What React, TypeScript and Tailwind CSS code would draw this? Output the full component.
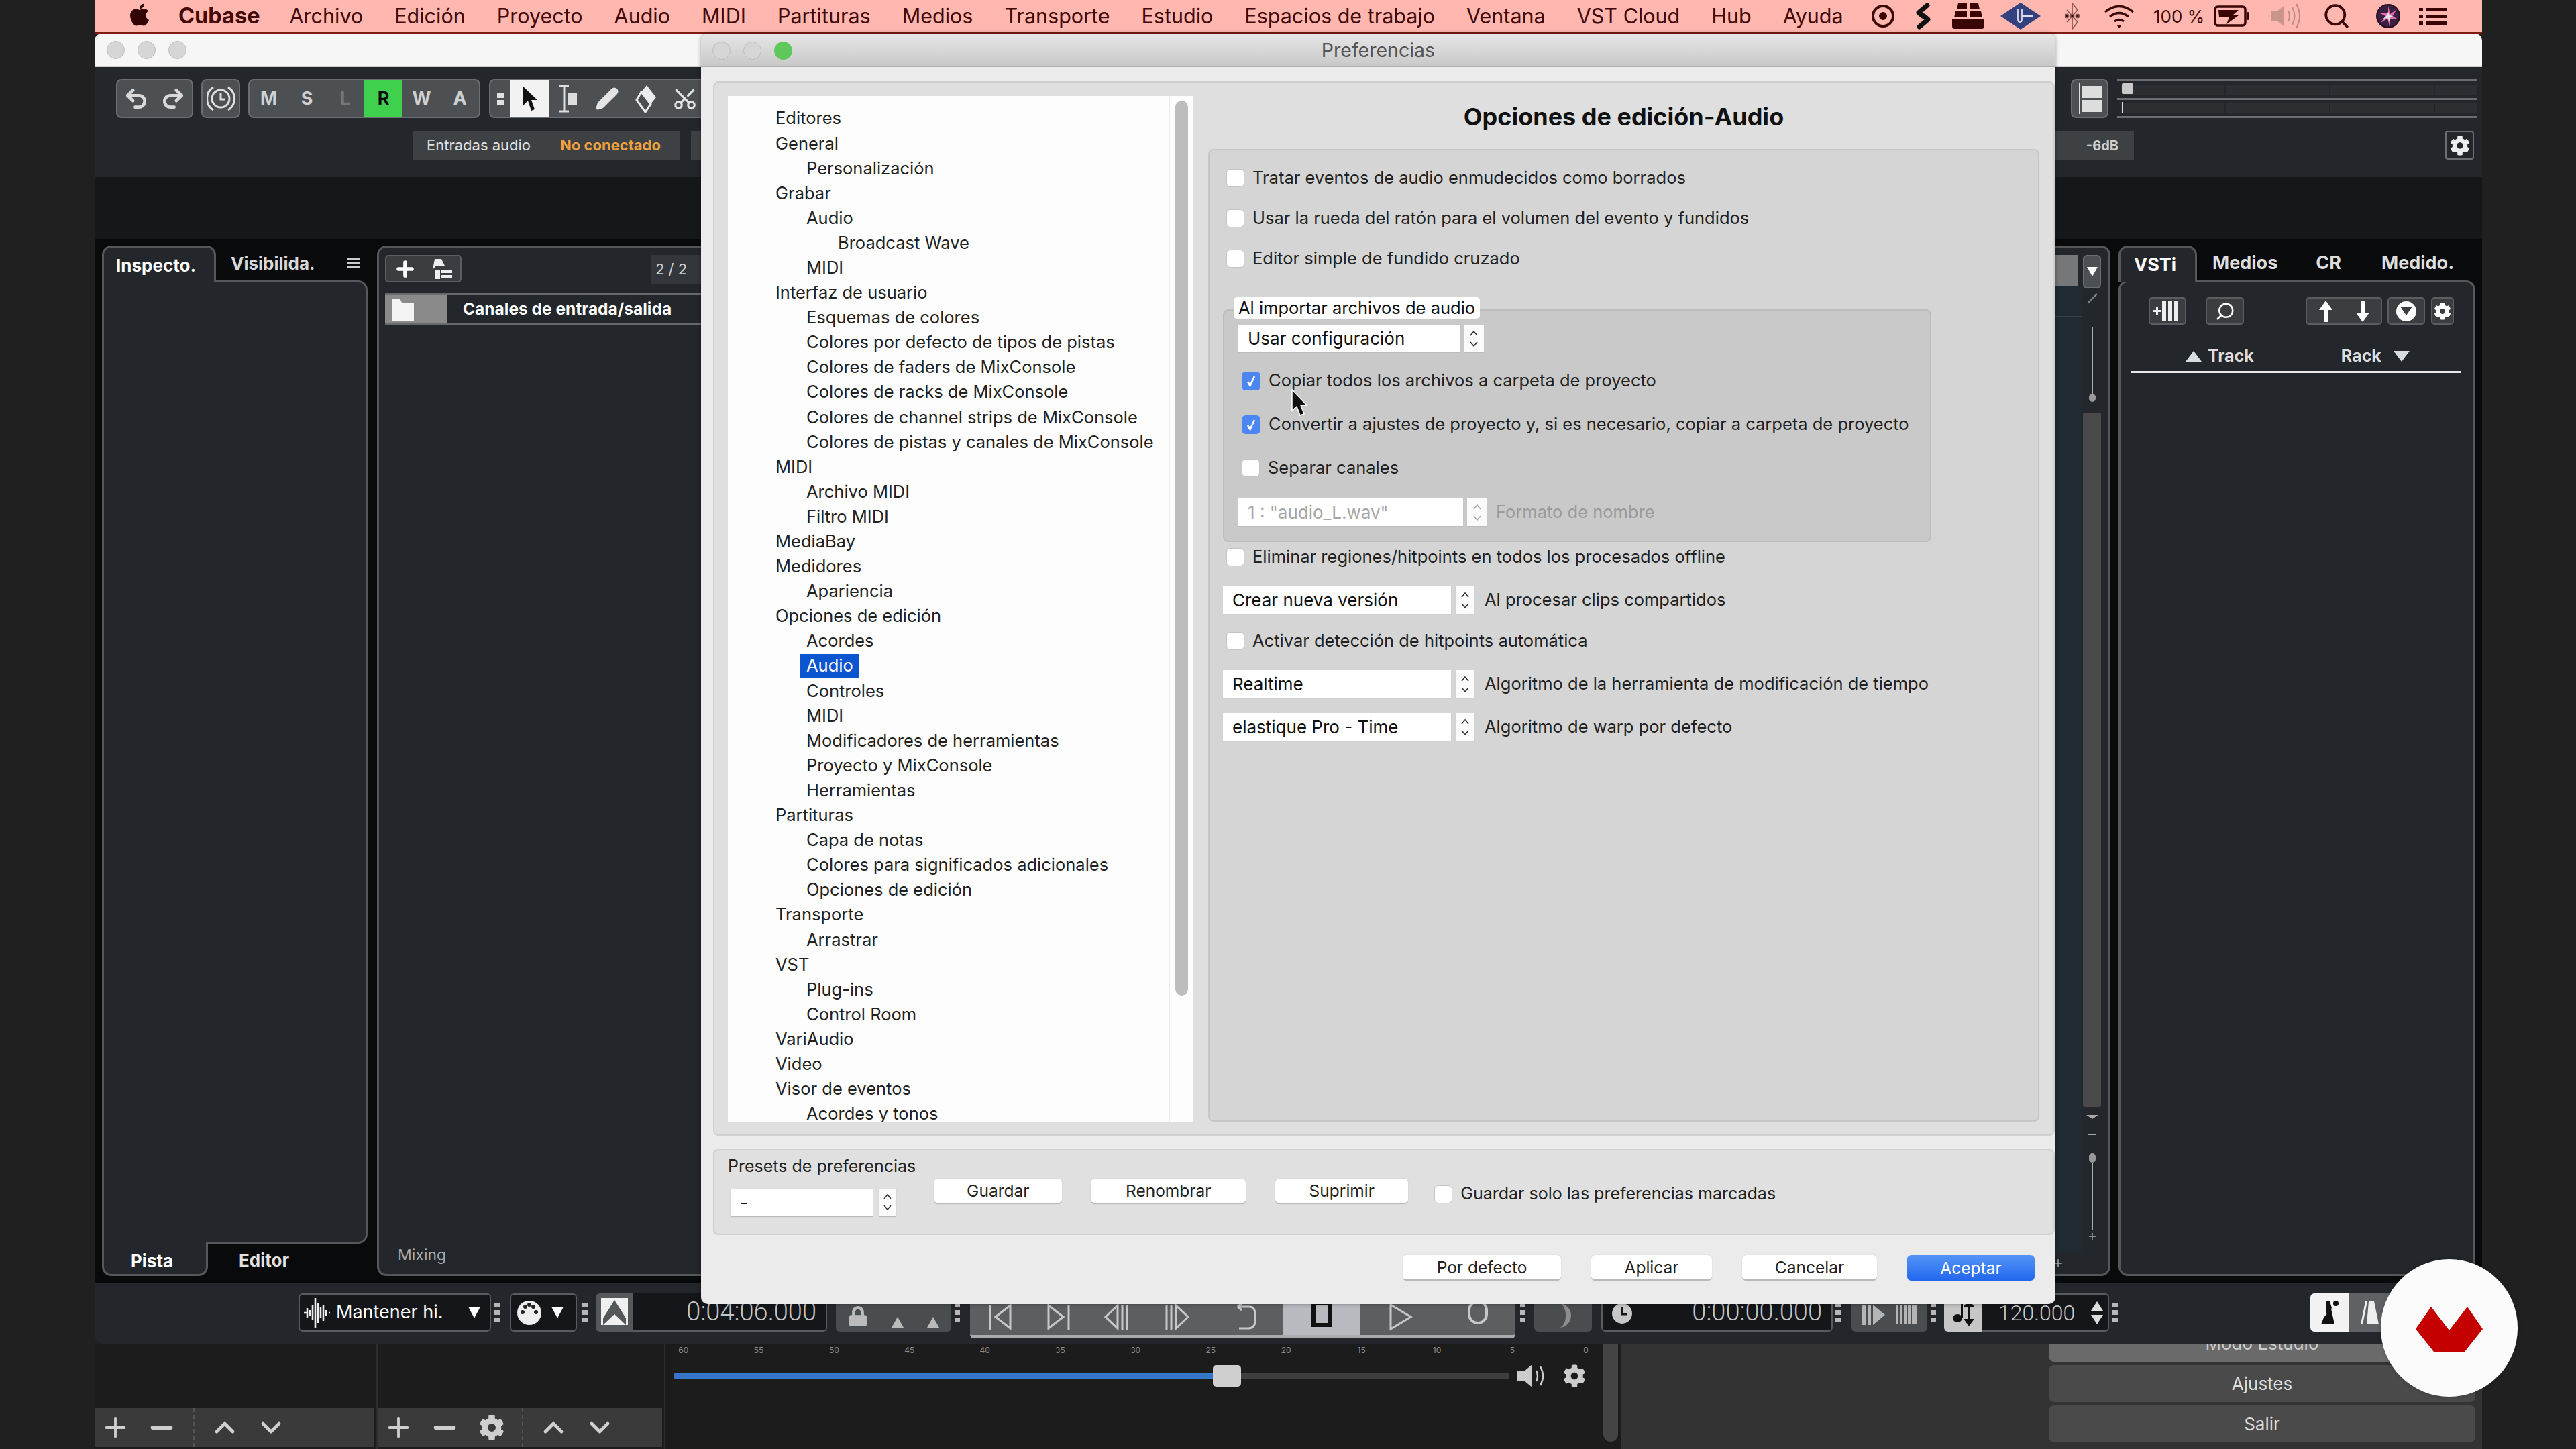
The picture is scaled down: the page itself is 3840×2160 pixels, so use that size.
import React from "react";
import { FaApple, FaCog, FaLock } from "react-icons/fa";
import { Undo2, Redo2, Pencil, Scissors, Plus, Minus, ChevronUp, ChevronDown, Search } from "lucide-react";

const tree: [number, string][] = [
  [0, "Editores"], [0, "General"], [1, "Personalización"], [0, "Grabar"], [1, "Audio"], [2, "Broadcast Wave"], [1, "MIDI"],
  [0, "Interfaz de usuario"], [1, "Esquemas de colores"], [1, "Colores por defecto de tipos de pistas"], [1, "Colores de faders de MixConsole"],
  [1, "Colores de racks de MixConsole"], [1, "Colores de channel strips de MixConsole"], [1, "Colores de pistas y canales de MixConsole"],
  [0, "MIDI"], [1, "Archivo MIDI"], [1, "Filtro MIDI"], [0, "MediaBay"], [0, "Medidores"], [1, "Apariencia"], [0, "Opciones de edición"],
  [1, "Acordes"], [1, "Audio"], [1, "Controles"], [1, "MIDI"], [1, "Modificadores de herramientas"], [1, "Proyecto y MixConsole"], [1, "Herramientas"],
  [0, "Partituras"], [1, "Capa de notas"], [1, "Colores para significados adicionales"], [1, "Opciones de edición"], [0, "Transporte"], [1, "Arrastrar"],
  [0, "VST"], [1, "Plug-ins"], [1, "Control Room"], [0, "VariAudio"], [0, "Video"], [0, "Visor de eventos"], [1, "Acordes y tonos"],
];
const menu = ["Archivo", "Edición", "Proyecto", "Audio", "MIDI", "Partituras", "Medios", "Transporte", "Estudio", "Espacios de trabajo", "Ventana", "VST Cloud", "Hub", "Ayuda"];
const db = ["-60", "-55", "-50", "-45", "-40", "-35", "-30", "-25", "-20", "-15", "-10", "-5", "0"];

function Dots() {
  return (
    <div className="flex flex-col gap-[4px] w-[8px]">
      <div className="h-[7px] bg-[#b8b8b8]" />
      <div className="h-[7px] bg-[#b8b8b8]" />
      <div className="h-[7px] bg-[#b8b8b8]" />
    </div>
  );
}

function Check({ on }: { on?: boolean }) {
  return (
    <div className={on ? "w-[28px] h-[28px] shrink-0 rounded-[6px] bg-[#4b86f2] flex items-center justify-center" : "w-[27px] h-[27px] shrink-0 rounded-[6px] bg-white border border-[#c4c4c4]"}>
      {on && (
        <svg width="18" height="20" viewBox="0 0 18 20" fill="none">
          <path d="M4 11l3.5 6L14 3" stroke="#fff" strokeWidth="2.6" />
        </svg>
      )}
    </div>
  );
}

function CheckRow({ label, h, on }: { label: string; h: string; on?: boolean }) {
  return (
    <div className={`flex items-center gap-[12px] ${h}`}>
      <Check on={on} />
      <span className="text-[25.5px] text-[#222]">{label}</span>
    </div>
  );
}

function Spin({ dim, w }: { dim?: boolean; w: string }) {
  const c = dim ? "#a8a8a8" : "#333";
  return (
    <div className={`${w} self-stretch bg-[#fbfbfb] flex items-center justify-center shadow-[0_1px_1px_#bbb]`}>
      <svg width="14" height="28" viewBox="0 0 14 28" fill="none" stroke={c} strokeWidth="1.6">
        <path d="M2 9l5-6 5 6" />
        <path d="M2 19l5 6 5-6" />
      </svg>
    </div>
  );
}

function Select({ text, w, spinGap, spinW, dim }: { text: string; w: string; spinGap: string; spinW: string; dim?: boolean }) {
  return (
    <div className={`flex items-center h-[41px] ${spinGap}`}>
      <div className={`${w} h-full bg-white shadow-[0_1px_1px_#bbb] flex items-center pl-[14px] text-[26px] ${dim ? "text-[#a6a6a6]" : "text-[#111]"}`}>{text}</div>
      <Spin dim={dim} w={spinW} />
    </div>
  );
}

function SelectRow({ text, label, cls }: { text: string; label: string; cls: string }) {
  return (
    <div className={`flex items-center ${cls}`}>
      <Select text={text} w="w-[340px]" spinGap="gap-[7px]" spinW="w-[28px]" />
      <span className="ml-[15px] text-[25.5px] text-[#222]">{label}</span>
    </div>
  );
}

function Btn({ text, w, blue }: { text: string; w: string; blue?: boolean }) {
  return (
    <div className={`${w} h-[38px] rounded-[6px] flex items-center justify-center text-[24.5px] ${blue ? "bg-gradient-to-b from-[#5494f8] to-[#2266ee] text-white" : "bg-white text-[#222] border-b-2 border-[#b9b9b9] shadow-[0_0_1px_#aaa]"}`}>
      {text}
    </div>
  );
}

function Group({ w, cls, children }: { w: string; cls?: string; children?: React.ReactNode }) {
  return <div className={`${w} h-[58px] flex items-center rounded-[8px] border-2 border-[#6b6e71] bg-[#4d5053] overflow-hidden ${cls ?? ""}`}>{children}</div>;
}

function Letter({ c, cls }: { c: string; cls?: string }) {
  return <div className={`w-[58px] h-full flex items-center justify-center text-[27px] font-bold ${cls ?? "text-[#d0d0d0]"}`}>{c}</div>;
}

function Lights({ green }: { green?: boolean }) {
  return (
    <div className="flex gap-[19px]">
      <div className="w-[27px] h-[27px] rounded-full bg-[#d6d6d6] border border-[#bdbdbd]" />
      <div className="w-[27px] h-[27px] rounded-full bg-[#d6d6d6] border border-[#bdbdbd]" />
      <div className={`w-[27px] h-[27px] rounded-full ${green ? "bg-[#5fc85b]" : "bg-[#d6d6d6] border border-[#bdbdbd]"}`} />
    </div>
  );
}

function SmallBox({ w, children }: { w: string; children?: React.ReactNode }) {
  return <div className={`${w} h-[41px] flex items-center justify-around rounded-[5px] border-2 border-[#5b5e61] bg-[#3b3e41] text-white`}>{children}</div>;
}

function BottomBar({ gear }: { gear?: boolean }) {
  return (
    <div className="mt-auto mb-[3px] h-[58px] mr-[3px] bg-[#3a3a3a] flex items-center text-[#cfcfcf]">
      <Plus size={46} strokeWidth={2} className="ml-[8px]" />
      <Minus size={46} strokeWidth={3} className="ml-[23px]" />
      {gear && <FaCog size={38} className="ml-[28px]" />}
      <div className={`h-full border-l-2 border-dashed border-[#555] ${gear ? "ml-[26px]" : "ml-[24px]"}`} />
      <ChevronUp size={48} strokeWidth={2.4} className="ml-[21px]" />
      <ChevronDown size={48} strokeWidth={2.4} className="ml-[21px]" />
    </div>
  );
}

function TIcon({ d, cx, fill }: { d: string; cx: string; fill?: string }) {
  return (
    <svg width="44" height="46" viewBox="0 0 44 46" className={`${cx} mt-[12px]`} fill={fill ?? "none"} stroke="#c8c8c8" strokeWidth="3">
      <path d={d} />
    </svg>
  );
}

export default function App() {
  return (
    <div className="relative w-[3840px] h-[2160px] overflow-hidden bg-[#202020] font-[family-name:Inter,sans-serif]">
      <div className="ml-[141px] w-[3559px] h-full flex flex-col">
        {/* menu bar */}
        <div className="h-[50px] shrink-0 bg-[#ffb7af] border-b-2 border-[#7d1a14] flex items-center pl-[48px] pr-[52px] text-[#430808] text-[30.5px]">
          <FaApple size={38} className="mr-[39px] text-[#330404] -mt-[4px]" />
          <span className="font-bold text-[32.5px] mr-[44px]">Cubase</span>
          <div className="flex gap-[47px]">
            {menu.map((m) => (
              <span key={m}>{m}</span>
            ))}
          </div>
          <div className="ml-auto flex items-center">
            <svg width="36" height="38" viewBox="0 0 36 38" fill="none"><circle cx="18" cy="19" r="15" stroke="#3a0505" strokeWidth="4" /><circle cx="18" cy="19" r="6" fill="#3a0505" /></svg>
            <svg width="28" height="40" viewBox="0 0 28 40" className="ml-[28px]" fill="none" stroke="#111" strokeWidth="7" strokeLinecap="round" strokeLinejoin="round"><path d="M20 4L7 15l6 5" /><path d="M8 36l13-11-6-5" /></svg>
            <svg width="50" height="40" viewBox="0 0 50 40" className="ml-[28px]" fill="#3a0505"><path d="M10 1h13v9H8zM27 1h13l2 9H27zM6 13h17v9H4zM27 13h17l2 9H27zM1 25h48v10q0 4-4 4H5q-4 0-4-4z" /></svg>
            <svg width="60" height="40" viewBox="0 0 60 40" className="ml-[23px]"><path d="M30 0l30 20-30 20L0 20z" fill="#33417f" /><path d="M26 10v15q0 4 3 4t3-4V10M32 20h16" stroke="#dde" strokeWidth="1.8" fill="none" /></svg>
            <svg width="22" height="42" viewBox="0 0 22 42" className="ml-[36px]" fill="none" stroke="#8a5a58" strokeWidth="1.8"><path d="M11 2v38l8-10L3 12M11 2l8 10L3 30" /><circle cx="3" cy="21" r="2.5" fill="#3a0505" /><circle cx="19" cy="21" r="2.5" fill="#3a0505" /><circle cx="11" cy="21" r="2.5" fill="#3a0505" /></svg>
            <svg width="46" height="38" viewBox="0 0 46 38" className="ml-[36px]" fill="none" stroke="#3a0505" strokeWidth="3.2"><path d="M2 13q21-17 42 0M9 20q14-11 28 0M16 27q7-5 14 0" /><path d="M23 37l-4-5h8z" fill="#3a0505" stroke="none" /></svg>
            <span className="ml-[28px] w-[77px] text-[26px] whitespace-nowrap">100 %</span>
            <svg width="54" height="32" viewBox="0 0 54 32" className="ml-[13px]" fill="none"><rect x="2" y="2" width="45" height="28" rx="4" stroke="#3a0505" strokeWidth="3.5" /><rect x="49" y="10" width="4" height="12" rx="2" fill="#3a0505" /><path d="M7 7h30l-9 8h9L19 28l4-10h-15z" fill="#3a0505" /></svg>
            <svg width="46" height="40" viewBox="0 0 46 40" className="ml-[30px]" fill="none" stroke="#b98a85" strokeWidth="2"><path d="M2 13h8l10-8v30l-10-8H2z" fill="#c9968f" stroke="none" /><path d="M27 12q4 8 0 16M33 7q7 13 0 26M39 2q10 18 0 36" /></svg>
            <Search size={42} strokeWidth={2.2} className="ml-[32px] text-[#3a0505]" />
            <svg width="36" height="38" viewBox="0 0 36 38" className="ml-[38px]"><circle cx="18" cy="19" r="17" fill="#3a2040" stroke="#2a0a1a" strokeWidth="2" /><path d="M18 4l3 12 10-7-7 10 9 5-12-1-1 11-3-11-10 6 7-10-8-4 12 0z" fill="#e86aa8" /><path d="M18 13l2 5 6 1-5 2-1 6-3-5-6 1 4-4z" fill="#dfe4ee" /></svg>
            <div className="ml-[28px] flex flex-col gap-[5px]">
              <div className="w-[42px] h-[5px] bg-[linear-gradient(90deg,#3a0505_6px,transparent_6px,transparent_10px,#3a0505_10px)]" />
              <div className="w-[42px] h-[5px] bg-[linear-gradient(90deg,#3a0505_6px,transparent_6px,transparent_10px,#3a0505_10px)]" />
              <div className="w-[42px] h-[5px] bg-[linear-gradient(90deg,#3a0505_6px,transparent_6px,transparent_10px,#3a0505_10px)]" />
            </div>
          </div>
        </div>
        {/* window title */}
        <div className="h-[50px] shrink-0 bg-[#f6f6f6] rounded-t-[10px] border-b-2 border-[#d0d0d0] flex items-center pl-[18px]">
          <Lights />
        </div>
        {/* toolbar */}
        <div className="h-[164px] shrink-0 bg-[#23262a] pt-[18px] pr-[8px] flex flex-col">
          <div className="flex items-start pl-[32px]">
            <Group w="w-[115px]" cls="justify-around text-[#d8d8d8]">
              <Undo2 size={38} strokeWidth={3} />
              <Redo2 size={38} strokeWidth={3} />
            </Group>
            <Group w="w-[58px] ml-[12px]" cls="justify-center">
              <svg width="42" height="44" viewBox="0 0 42 44" fill="none" stroke="#e0e0e0" strokeWidth="3"><path d="M10 5a20 20 0 0 0 0 34M32 5a20 20 0 0 1 0 34" /><circle cx="21" cy="22" r="13" /><path d="M21 13v10h7" /></svg>
            </Group>
            <Group w="w-[346px] ml-[12px]">
              <Letter c="M" />
              <Letter c="S" />
              <Letter c="L" cls="text-[#75787b]" />
              <Letter c="R" cls="bg-[#3fd14e] text-[#0a0a0a]" />
              <Letter c="W" />
              <Letter c="A" />
            </Group>
            <Group w="w-[400px] ml-[13px]">
              <div className="w-[29px] flex justify-center"><div className="flex flex-col gap-[3px] w-[10px]"><div className="h-[7px] bg-[#e0e0e0]" /><div className="h-[7px] bg-[#e0e0e0]" /></div></div>
              <div className="w-[58px] h-full bg-[#f2f2f2] flex items-center justify-center">
                <svg width="26" height="40" viewBox="0 0 26 40"><path d="M4 2v28l7-7 5 15 5-2-5-14h9z" fill="#111" /></svg>
              </div>
              <div className="w-[58px] flex justify-center">
                <svg width="34" height="44" viewBox="0 0 34 44" fill="none"><path d="M4 3h14M4 41h14M11 3v38" stroke="#ddd" strokeWidth="3" /><rect x="17" y="14" width="13" height="18" fill="#ddd" /></svg>
              </div>
              <div className="w-[58px] flex justify-center"><Pencil size={36} className="text-[#e4e4e4]" fill="#e4e4e4" /></div>
              <div className="w-[58px] flex justify-center">
                <svg width="34" height="44" viewBox="0 0 34 44"><path d="M18 2l14 18-8 10L10 12z" fill="#ececec" /><path d="M10 12l14 18-8 12L3 24z" fill="none" stroke="#ececec" strokeWidth="3" /></svg>
              </div>
              <div className="w-[58px] flex justify-center"><Scissors size={38} className="text-[#e4e4e4] -rotate-90" /></div>
            </Group>
            <div className="ml-auto flex items-start">
              <div className="w-[56px] h-[58px] rounded-[8px] border-2 border-[#6b6e71] bg-[#4d5053] flex items-center pl-[10px] gap-[3px]">
                <div className="w-[2px] h-[46px] bg-[#ddd]" />
                <div className="flex flex-col gap-[3px]"><div className="w-[30px] h-[18px] bg-[#ddd]" /><div className="w-[30px] h-[18px] bg-[#ddd]" /></div>
              </div>
              <div className="ml-[13px] w-[536px] h-[58px] flex flex-col">
                {[0, 1].map((i) => (
                  <div key={i} className="relative h-[28px] border-t-[3px] border-[#6a6d70] flex items-center gap-[2px] pl-[6px] last:border-b-[3px] last:h-[30px]">
                    <div className="flex-1 h-[16px] bg-[#2c2f32]" />
                    <div className="flex-1 h-[16px] bg-[#2c2f32]" />
                    <div className="flex-1 h-[16px] bg-[#2c2f32]" />
                    <div className="w-[62px] h-[16px] bg-[#2c2f32]" />
                    {i === 0 && <div className="absolute left-[7px] top-[3px] w-[17px] h-[16px] rounded-[2px] bg-[#c9c9c9]" />}
                    {i === 1 && <div className="absolute left-[7px] top-[3px] w-[2px] h-[16px] bg-[#ddd]" />}
                  </div>
                ))}
              </div>
            </div>
          </div>
          <div className="mt-[19px] flex items-center">
            <div className="ml-[474px] w-[398px] h-[43px] bg-[#3e4144] flex items-center pl-[21px] text-[22px]">
              <span className="text-[#e2e2e2]">Entradas audio</span>
              <span className="ml-[44px] text-[#eea13e] font-bold">No conectado</span>
            </div>
            <div className="ml-[17px] w-[60px] h-[43px] bg-[#3e4144]" />
            <div className="ml-auto mr-[4px] flex items-center">
              <div className="w-[120px] h-[43px] bg-[#3e4144] flex items-center justify-end pr-[23px] text-[20px] font-bold text-[#cfcfcf]">-6dB</div>
              <div className="ml-[464px] w-[43px] h-[43px] rounded-[4px] border-2 border-[#6b6e71] flex items-center justify-center text-[#eee]"><FaCog size={30} /></div>
            </div>
          </div>
        </div>
        <div className="h-[92px] shrink-0 bg-[#15181b]" />
        {/* panels */}
        <div className="h-[1556px] shrink-0 bg-[#090a0b] pt-[10px] pb-[10px] pl-[11px] pr-[10px] flex">
          {/* inspector */}
          <div className="w-[396px] shrink-0 flex flex-col">
            <div className="h-[52px] flex items-center shrink-0 text-[26px] font-bold">
              <div className="w-[170px] h-[55px] self-start z-10 flex items-center pl-[18px] bg-[#23262a] border-t-[3px] border-x-[3px] border-[#55585b] rounded-t-[14px] text-white">Inspecto.</div>
              <span className="ml-[22px] text-[#d8d8d8]">Visibilida.</span>
              <div className="ml-[48px] w-[18px] flex flex-col gap-[2px]"><div className="h-[4px] bg-[#ccc]" /><div className="h-[4px] bg-[#ccc]" /><div className="h-[4px] bg-[#ccc]" /></div>
            </div>
            <div className="flex-1 bg-[#23262a] border-[3px] border-[#55585b] rounded-tr-[14px] rounded-br-[14px]" />
            <div className="h-[48px] flex items-end shrink-0 text-[26px] font-bold">
              <div className="w-[158px] h-[51px] -mt-[3px] z-10 flex items-center pl-[40px] pt-[8px] bg-[#23262a] border-b-[3px] border-x-[3px] border-[#55585b] rounded-b-[14px] text-white">Pista</div>
              <span className="ml-[46px] mb-[4px] text-[#e2e2e2]">Editor</span>
            </div>
          </div>
          {/* project */}
          <div className="ml-[14px] flex-1 bg-[#23262a] border-[3px] border-[#55585b] rounded-[14px] flex overflow-hidden">
            <div className="flex-1 flex flex-col pt-[11px] pl-[9px]">
              <div className="h-[46px] flex shrink-0">
                <SmallBox w="w-[114px]">
                  <Plus size={34} strokeWidth={4} />
                  <svg width="34" height="34" viewBox="0 0 34 34" fill="#eee"><path d="M6 2h10l5 10H8l-5 6zM6 18h8v14H6z" /><rect x="16" y="18" width="16" height="5" /><rect x="16" y="26" width="16" height="5" /></svg>
                </SmallBox>
                <div className="ml-[282px] w-[75px] h-[43px] pr-[14px] bg-[#33363a] flex items-center justify-center text-[22px] text-[#cfcfcf]">2 / 2</div>
                <div className="flex-1 h-[57px] mr-[7px] bg-[#757779]" />
              </div>
              <div className="flex flex-1 mt-[11px]">
                <div className="w-[2000px] flex flex-col">
                  <div className="h-[47px] border-y-[3px] border-[#666a6d] flex items-center">
                    <div className="w-[92px] h-full bg-[#8a8a8a] flex items-center pl-[9px]">
                      <svg width="36" height="36" viewBox="0 0 36 36" fill="#f4f4f4"><path d="M1 2h12l3 6h18v28H1z" /></svg>
                    </div>
                    <span className="ml-[24px] text-[24.5px] font-bold text-white">Canales de entrada/salida</span>
                  </div>
                  <span className="mt-auto mb-[11px] ml-[19px] text-[23px] text-[#a8a8a8]">Mixing</span>
                </div>
                <div className="flex-1 -mt-[11px] flex flex-col">
                  <div className="flex-1 bg-[#1f2a33]">
                    <div className="h-[45px]" />
                    <div className="border-t border-[#36414a]" />
                  </div>
                  <div className="h-[32px] shrink-0 pl-[485px] flex items-center"><Plus size={18} className="text-[#aaa]" /></div>
                </div>
              </div>
            </div>
            <div className="w-[39px] shrink-0 flex flex-col items-center pt-[11px] pr-[10px]">
              <div className="w-[27px] h-[50px] rounded-[6px] border-2 border-[#6b6e71] bg-[#4d5053] flex items-center justify-center"><div className="w-0 h-0 border-x-[8px] border-x-transparent border-t-[14px] border-t-white" /></div>
              <div className="mt-[14px] w-[20px] h-[2px] bg-[#888] -rotate-45" />
              <div className="mt-[41px] w-[2px] h-[100px] bg-[#aaa]" />
              <div className="w-[10px] h-[12px] rounded-full bg-[#999]" />
              <div className="mt-[16px] w-[27px] h-[1035px] rounded-[3px] bg-[#4a4a4a]" />
              <div className="mt-[12px] w-0 h-0 border-x-[9px] border-x-transparent border-t-[6px] border-t-[#aaa]" />
              <div className="mt-[22px] w-[12px] h-[2px] bg-[#aaa]" />
              <div className="mt-[27px] w-[10px] h-[14px] rounded-full bg-[#999]" />
              <div className="w-[2px] h-[100px] bg-[#aaa]" />
              <Plus size={16} className="text-[#aaa] mt-[2px]" />
            </div>
          </div>
          {/* right zone */}
          <div className="ml-[12px] w-[532px] shrink-0 flex flex-col">
            <div className="h-[52px] flex items-center shrink-0 text-[27px] font-bold text-[#ddd]">
              <div className="w-[117px] h-[55px] self-start z-10 flex items-center pl-[20px] bg-[#23262a] border-t-[3px] border-x-[3px] border-[#55585b] rounded-t-[14px] text-white">VSTi</div>
              <span className="ml-[23px]">Medios</span>
              <span className="ml-[57px]">CR</span>
              <span className="ml-[60px]">Medido.</span>
            </div>
            <div className="flex-1 bg-[#23262a] border-[3px] border-[#55585b] rounded-[14px] pt-[22px] flex flex-col">
              <div className="flex items-center">
                <div className="ml-[42px]"><SmallBox w="w-[56px]"><svg width="44" height="34" viewBox="0 0 44 34" fill="#eee"><path d="M1 15h4v-4h3v4h4v3H8v4H5v-4H1zM14 2h6v30h-6zM23 2h6v30h-6zM32 2h6v30h-6z" /></svg></SmallBox></div>
                <div className="ml-[29px]"><SmallBox w="w-[57px]"><Search size={30} className="-scale-x-100" /></SmallBox></div>
                <div className="ml-[92px]"><SmallBox w="w-[114px]">
                  <svg width="24" height="34" viewBox="0 0 24 34" fill="#fff"><path d="M12 1l10 14h-7v18H9V15H2z" /></svg>
                  <svg width="24" height="34" viewBox="0 0 24 34" fill="#fff"><path d="M12 33L2 19h7V1h6v18h7z" /></svg>
                </SmallBox></div>
                <div className="ml-[8px]"><SmallBox w="w-[56px]"><div className="w-[30px] h-[30px] rounded-full bg-white flex items-center justify-center"><div className="w-0 h-0 border-x-[9px] border-x-transparent border-t-[13px] border-t-[#3b3e41]" /></div></SmallBox></div>
                <div className="ml-[9px]"><SmallBox w="w-[34px]"><FaCog size={26} /></SmallBox></div>
              </div>
              <div className="mt-[24px] ml-[15px] w-[492px] h-[48px] border-b-[3px] border-[#e8e8e8] flex items-center text-[25px] font-bold text-[#ddd]">
                <div className="w-0 h-0 ml-[82px] border-x-[12px] border-x-transparent border-b-[16px] border-b-[#d8dde2]" />
                <span className="ml-[9px]">Track</span>
                <span className="ml-[130px]">Rack</span>
                <div className="w-0 h-0 ml-[18px] border-x-[12px] border-x-transparent border-t-[16px] border-t-[#d8dde2]" />
              </div>
            </div>
          </div>
        </div>
        {/* transport */}
        <div className="h-[91px] shrink-0 z-10 bg-[#23262a] rounded-b-[14px] pt-[16px] flex items-start text-[#c9c9c9]">
          <div className="ml-[304px] w-[287px] h-[57px] rounded-[6px] border-2 border-[#595c5f] bg-[#14161a] flex items-center pl-[4px] text-white">
            <svg width="42" height="50" viewBox="0 0 42 50" fill="none" stroke="#eee" strokeWidth="2.6"><path d="M2 25h4M7 18v14M11 21v8M15 14v22M19 3v44M23 10v30M27 17v16M31 13v24M35 21v8M39 25h2" /></svg>
            <span className="ml-[8px] text-[27px]">Mantener hi.</span>
            <div className="ml-auto mr-[14px] w-0 h-0 border-x-[9px] border-x-transparent border-t-[17px] border-t-white" />
          </div>
          <div className="ml-[5px] mt-[14px]"><Dots /></div>
          <div className="ml-[15px] w-[100px] h-[57px] rounded-[6px] border-2 border-[#595c5f] bg-[#14161a] flex items-center pl-[8px]">
            <svg width="38" height="38" viewBox="0 0 38 38"><circle cx="19" cy="19" r="18" fill="#eee" /><circle cx="9" cy="18" r="3" fill="#222" /><circle cx="13" cy="10" r="3" fill="#222" /><circle cx="19" cy="7" r="3" fill="#222" /><circle cx="25" cy="10" r="3" fill="#222" /><circle cx="29" cy="18" r="3" fill="#222" /></svg>
            <div className="ml-[14px] w-0 h-0 border-x-[9px] border-x-transparent border-t-[17px] border-t-white" />
          </div>
          <div className="ml-[8px] mt-[14px]"><Dots /></div>
          <div className="ml-[12px] w-[55px] h-[57px] rounded-l-[6px] bg-[#55585b] flex items-center justify-center">
            <svg width="40" height="44" viewBox="0 0 40 44"><rect width="40" height="40" fill="#f0f0f0" /><path d="M3 40V30L20 3l17 27v10L20 24z" fill="#55585b" /></svg>
          </div>
          <div className="w-[290px] h-[57px] rounded-r-[6px] border-b-2 border-r-2 border-[#595c5f] bg-[#14161a] flex items-center justify-end pr-[14px] font-[family-name:Roboto,sans-serif] text-[38px] font-light text-[#c4c4c4]">0:04:06.000</div>
          <div className="ml-[13px] w-[172px] h-[57px] rounded-[6px] bg-[#4a4d50] flex items-end justify-around pb-[6px]">
            <FaLock size={30} className="text-[#bbb] mb-[2px]" />
            <div className="w-0 h-0 border-x-[9px] border-x-transparent border-b-[16px] border-b-[#bbb]" />
            <div className="w-0 h-0 border-x-[9px] border-x-transparent border-b-[16px] border-b-[#bbb]" />
          </div>
          <div className="ml-[5px] mt-[14px]"><Dots /></div>
          <div className="ml-[15px] w-[813px] h-[67px] rounded-b-[6px] bg-[#5c5e60] border-b-[5px] border-[#a8aaac] flex items-start">
            <TIcon d="M6 6v36M36 6L14 23l22 17z" cx="ml-[24px]" />
            <TIcon d="M36 6v36M6 6l22 17L6 40z" cx="ml-[43px]" />
            <TIcon d="M36 6v36M29 6v36M22 6L4 23l18 17z" cx="ml-[43px]" />
            <TIcon d="M6 6v36M13 6v36M20 6l18 17-18 17z" cx="ml-[45px]" />
            <TIcon d="M12 8h18q8 0 8 12v8q0 12-10 12H14M12 8l6-5M12 8l6 5" cx="ml-[56px]" />
            <div className="ml-[35px] w-[116px] h-full bg-[#b7bbbf] flex justify-center pt-[12px]"><div className="w-[30px] h-[38px] border-[6px] border-[#111] bg-[#b7bbbf]" /></div>
            <TIcon d="M8 5l30 18L8 41z" cx="ml-[37px]" />
            <div className="ml-[79px] mt-[10px] w-[30px] h-[36px] rounded-full border-[4px] border-[#c8c8c8]" />
          </div>
          <div className="ml-[7px] mt-[14px]"><Dots /></div>
          <div className="ml-[13px] w-[86px] h-[57px] rounded-[6px] bg-[#4a4d50] flex items-center justify-center pt-[8px]">
            <div className="w-[24px] h-[36px] border-r-[8px] border-[#8d8d8d] rounded-r-full" />
          </div>
          <div className="ml-[14px] w-[345px] h-[57px] rounded-[6px] border-b-2 border-x-2 border-[#595c5f] bg-[#14161a] flex items-center justify-between pl-[14px] pr-[14px] font-[family-name:Roboto,sans-serif] text-[38px] font-light text-[#c4c4c4]">
            <svg width="30" height="32" viewBox="0 0 30 32" className="mt-[4px]"><circle cx="15" cy="16" r="15" fill="#c8c8c8" /><path d="M15 6v11h7" stroke="#14161a" strokeWidth="3" fill="none" /></svg>
            0:00:00.000
          </div>
          <div className="ml-[4px] mt-[14px]"><Dots /></div>
          <div className="ml-[16px] w-[113px] h-[57px] rounded-[6px] bg-[#4a4d50] flex items-center justify-center gap-[14px] pt-[6px]">
            <svg width="36" height="34" viewBox="0 0 36 34" fill="#b5b5b5"><rect x="1" y="2" width="5" height="30" /><rect x="9" y="2" width="5" height="30" /><path d="M17 2l18 15-18 15z" /></svg>
            <svg width="34" height="34" viewBox="0 0 34 34" fill="#b5b5b5"><rect x="1" y="3" width="4" height="28" /><rect x="7" y="3" width="4" height="28" /><rect x="13" y="3" width="4" height="28" /><rect x="19" y="3" width="4" height="28" /><rect x="25" y="3" width="8" height="28" /></svg>
          </div>
          <div className="ml-[5px] mt-[14px]"><Dots /></div>
          <div className="ml-[12px] w-[57px] h-[57px] rounded-l-[6px] bg-[#c6c6c6] flex items-center justify-center text-black">
            <svg width="36" height="44" viewBox="0 0 36 44" fill="#111"><ellipse cx="9" cy="30" rx="7" ry="6" /><rect x="14" y="6" width="3" height="24" /><path d="M26 4v36M20 12l6-8 6 8zM20 32l6 8 6-8z" stroke="#111" strokeWidth="2" /></svg>
          </div>
          <div className="w-[189px] h-[57px] rounded-r-[6px] border-y-2 border-r-2 border-[#595c5f] bg-[#14161a] flex items-center pl-[24px] font-[family-name:Roboto,sans-serif] text-[32px] font-light text-[#c9c9c9]">
            120.000
            <div className="ml-[24px] flex flex-col gap-[6px]">
              <div className="w-0 h-0 border-x-[9px] border-x-transparent border-b-[14px] border-b-[#ddd]" />
              <div className="w-0 h-0 border-x-[9px] border-x-transparent border-t-[14px] border-t-[#ddd]" />
            </div>
          </div>
          <div className="ml-[5px] mt-[14px]"><Dots /></div>
          <div className="ml-[287px] w-[58px] h-[57px] rounded-l-[6px] bg-[#f2f2f2] flex items-center justify-center">
            <svg width="30" height="38" viewBox="0 0 30 38" fill="#111"><path d="M9 2h6l3 10-8 9zM6 26l11-13 5 23H2z" /><circle cx="24" cy="5" r="4" /></svg>
          </div>
          <div className="w-[90px] h-[57px] bg-[#5f6164] flex items-center pl-[16px]">
            <svg width="30" height="38" viewBox="0 0 30 38" fill="#eee"><path d="M8 2L1 36h3L11 2zM13 2h8l7 34H10z" /></svg>
          </div>
        </div>
        {/* bottom */}
        <div className="flex-1 min-h-0 flex bg-[#1c1c1c] overflow-hidden">
          <div className="w-[422px] shrink-0 border-r-2 border-[#2d2d2d] flex flex-col"><BottomBar /></div>
          <div className="w-[429px] shrink-0 border-r-2 border-[#2d2d2d] flex flex-col"><BottomBar gear /></div>
          <div className="w-[1392px] shrink-0 pl-[13px] flex flex-col">
            <div className="h-[18px] mt-[1px] w-[1370px] flex justify-between text-[12px] text-[#8a8a8a]">
              {db.map((d) => (
                <span key={d} className="w-[22px] text-center">{d}</span>
              ))}
            </div>
            <div className="mt-[9px] flex items-center">
              <div className="w-[803px] h-[10px] bg-[#3576c8] rounded-l-[3px]" />
              <div className="w-[42px] h-[32px] rounded-[5px] bg-[#cfcfcf]" />
              <div className="w-[400px] h-[10px] bg-[#3e3e3e]" />
              <svg width="52" height="40" viewBox="0 0 52 40" className="ml-[10px]" fill="none" stroke="#ccc" strokeWidth="2.5"><path d="M2 13h10l12-10v34L12 27H2z" fill="#ccc" stroke="none" /><path d="M30 12q4 8 0 16M36 6q8 14 0 28" /></svg>
              <FaCog size={34} className="ml-[18px] text-[#ccc]" />
            </div>
          </div>
          <div className="w-[33px] shrink-0 flex justify-center"><div className="w-[22px] h-[146px] bg-[#444] rounded-b-full" /></div>
          <div className="flex-1 bg-[#333] pl-[637px] pr-[10px] flex flex-col gap-[5px]">
            {["Modo Estudio", "Ajustes", "Salir"].map((t, i) => (
              <div key={t} className={`h-[55px] shrink-0 rounded-[8px] flex items-center justify-center text-[26px] ${i === 0 ? "-mt-[28px] bg-[#6a6a6a] text-[#ccc]" : "bg-[#4a4a4a] text-[#dcdcdc]"}`}>{t}</div>
            ))}
          </div>
        </div>
      </div>

      {/* preferences dialog */}
      <div className="absolute left-[1045px] top-[50px] w-[2019px] h-[1894px] z-20 rounded-[10px] bg-[#ebebeb] flex flex-col overflow-hidden shadow-[0_0_6px_rgba(0,0,0,0.35)]">
        <div className="h-[50px] shrink-0 pt-[2px] bg-gradient-to-b from-[#e6e6e6] to-[#c9c9c9] border-b-2 border-[#aeaeae] relative flex items-center justify-center text-[28.5px] text-[#555]">
          <div className="absolute left-[17px] top-[12px]"><Lights green /></div>
          Preferencias
        </div>
        <div className="ml-[18px] mr-[1px] mt-[21px] h-[1572px] shrink-0 rounded-[8px] border-2 border-[#cfcfcf] bg-[#dfdfdf] flex pl-[20px] pt-[20px] pb-[19px]">
          <div className="w-[693px] shrink-0 h-full bg-[#fdfdfd] flex">
            <div className="w-[659px] h-full overflow-hidden pt-[15px] border-r-2 border-[#ececec]">
              {tree.map(([lvl, t], i) => (
                <div key={i} className={`h-[37.1px] flex items-center text-[25.5px] text-[#222] ${lvl === 0 ? "pl-[71px]" : lvl === 1 ? "pl-[117px]" : "pl-[164px]"}`}>
                  {i === 22 ? <span className="-ml-[9px] bg-[#0b55d0] text-white px-[9px] h-[35px] flex items-center">{t}</span> : t}
                </div>
              ))}
            </div>
            <div className="flex-1 pt-[7px] flex justify-center"><div className="w-[19px] h-[1334px] rounded-full bg-[#bdbdbd]" /></div>
          </div>
          <div className="ml-[23px] w-[1239px] shrink-0 flex flex-col">
            <div className="h-[62px] shrink-0 flex items-center justify-center text-[36px] font-bold text-[#111]">Opciones de edición-Audio</div>
            <div className="mt-[17px] flex-1 rounded-[8px] border-2 border-[#c6c6c6] bg-[#d5d5d5] pl-[25px] pt-[11px]">
              <CheckRow label="Tratar eventos de audio enmudecidos como borrados" h="h-[60px]" />
              <CheckRow label="Usar la rueda del ratón para el volumen del evento y fundidos" h="h-[60px]" />
              <CheckRow label="Editor simple de fundido cruzado" h="h-[60px]" />
              <div className="mt-[46px] -ml-[5px] w-[1056px] h-[347px] rounded-[8px] border-2 border-[#bcbcbc] bg-[#c9c9c9] pl-[21px]">
                <div className="-mt-[20px] -ml-[7px] w-fit h-[32px] px-[7px] rounded-[5px] bg-white flex items-center text-[25.5px] text-[#111]">Al importar archivos de audio</div>
                <div className="mt-[9px]"><Select text="Usar configuración" w="w-[331px]" spinGap="gap-[5px]" spinW="w-[30px]" /></div>
                <div className="mt-[10px] ml-[5px]">
                  <CheckRow label="Copiar todos los archivos a carpeta de proyecto" h="h-[65px]" on />
                  <CheckRow label="Convertir a ajustes de proyecto y, si es necesario, copiar a carpeta de proyecto" h="h-[65px]" on />
                  <CheckRow label="Separar canales" h="h-[65px]" />
                </div>
                <div className="mt-[13px] flex items-center">
                  <Select text={'1 : "audio_L.wav"'} w="w-[335px]" spinGap="gap-[6px]" spinW="w-[29px]" dim />
                  <span className="ml-[14px] text-[25.5px] text-[#9a9a9a]">Formato de nombre</span>
                </div>
              </div>
              <CheckRow label="Eliminar regiones/hitpoints en todos los procesados offline" h="h-[44px]" />
              <SelectRow text="Crear nueva versión" label="Al procesar clips compartidos" cls="mt-[22px] -ml-[5px]" />
              <CheckRow label="Activar detección de hitpoints automática" h="h-[44px] mt-[18px]" />
              <SelectRow text="Realtime" label="Algoritmo de la herramienta de modificación de tiempo" cls="mt-[22px] -ml-[5px]" />
              <SelectRow text="elastique Pro - Time" label="Algoritmo de warp por defecto" cls="mt-[23px] -ml-[5px]" />
            </div>
          </div>
        </div>
        <div className="ml-[18px] mr-[1px] mt-[20px] h-[128px] shrink-0 rounded-[8px] border-2 border-[#cfcfcf] bg-[#e0e0e0] flex items-start pl-[20px]">
          <div className="flex flex-col pt-[5px]">
            <span className="text-[25px] text-[#222]">Presets de preferencias</span>
            <div className="mt-[14px] ml-[4px]"><Select text="-" w="w-[212px]" spinGap="gap-[9px]" spinW="w-[26px]" /></div>
          </div>
          <div className="ml-[27px] mt-[42px]"><Btn text="Guardar" w="w-[191px]" /></div>
          <div className="ml-[43px] mt-[42px]"><Btn text="Renombrar" w="w-[231px]" /></div>
          <div className="ml-[44px] mt-[42px]"><Btn text="Suprimir" w="w-[198px]" /></div>
          <div className="ml-[39px] mt-[50px] flex items-center gap-[12px] h-[30px]">
            <Check />
            <span className="text-[25px] text-[#222]">Guardar solo las preferencias marcadas</span>
          </div>
        </div>
        <div className="mt-[30px] pr-[31px] flex justify-end gap-[45px]">
          <Btn text="Por defecto" w="w-[236px]" />
          <Btn text="Aplicar" w="w-[180px]" />
          <Btn text="Cancelar" w="w-[201px]" />
          <Btn text="Aceptar" w="w-[190px]" blue />
        </div>
      </div>

      {/* cursor */}
      <svg width="30" height="42" viewBox="0 0 30 42" className="absolute left-[1923px] top-[580px] z-30"><path d="M3 1v31l7-6 5 13 6-2-5-13h9z" fill="#111" stroke="#fff" strokeWidth="1.5" /></svg>

      {/* badge */}
      <div className="absolute left-[3549px] top-[1877px] z-30 w-[204px] h-[205px] rounded-full bg-[#fbfbfb] shadow-[0_0_6px_rgba(0,0,0,0.2)] flex items-center justify-center">
        <svg width="100" height="67" viewBox="0 0 100 67" className="mt-[3px]">
          <path d="M23 0L50 35 77 0l23 33-27 34H27L0 33z" fill="#c40000" />
        </svg>
      </div>
    </div>
  );
}
